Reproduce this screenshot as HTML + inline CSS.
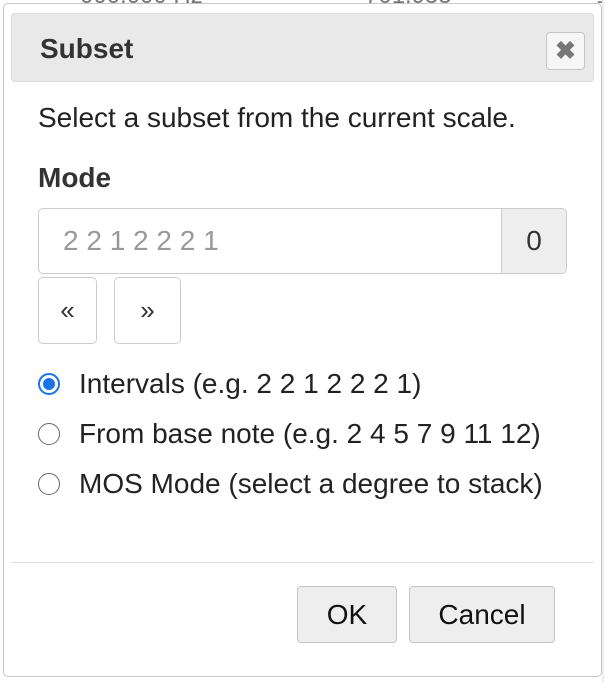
<!DOCTYPE html>
<html><head><meta charset="utf-8"><style>
*{box-sizing:border-box;margin:0;padding:0}
body{width:604px;height:682px;background:#fff;font-family:"Liberation Sans",Arial,sans-serif;position:relative;overflow:hidden;color:#222}
.bg{position:absolute;color:#777;font-size:24px}
.dlg{position:absolute;left:3px;top:3px;width:599px;height:674px;border:1px solid #c8c8c8;border-radius:5px;background:#fff}
.hdr{position:absolute;left:7px;top:9px;width:583px;height:69px;background:#e9e9e9;border:1px solid #dcdcdc;border-radius:4px}
.hdr .t{position:absolute;left:28px;top:19px;font-size:28px;font-weight:bold;color:#333}
.x{position:absolute;left:534px;top:18px;width:39px;height:38px;border:1px solid #c5c5c5;border-radius:4px;background:#f6f6f6;color:#777;font-size:25px;font-weight:bold;text-align:center;line-height:36px}
.txt{position:absolute;font-size:28px;color:#222;line-height:32px}
.inp{position:absolute;left:34px;top:204px;width:529px;height:66px;border:1px solid #ccc;border-radius:5px;overflow:hidden;background:#fff}
.inp .v{position:absolute;left:24px;top:16px;font-size:28px;color:#999}
.inp .a{position:absolute;right:0;top:0;width:65px;height:64px;background:#eee;border-left:1px solid #ccc;text-align:center;line-height:64px;font-size:28px;color:#333}
.b{position:absolute;border:1px solid #ccc;border-radius:5px;background:#fff;text-align:center;font-size:26px;color:#333}
.r{position:absolute;left:34px;width:22px;height:22px;border:1.5px solid #666;border-radius:50%;background:#fff}
.r.on{border:2px solid #1a73e8}
.r.on::after{content:"";position:absolute;left:3px;top:3px;width:12px;height:12px;border-radius:50%;background:#1a73e8}
.sep{position:absolute;left:7px;top:558px;width:583px;height:1px;background:#ddd}
.btn{position:absolute;top:582px;height:57px;border:1px solid #c5c5c5;border-radius:4px;background:#eee;font-size:28px;color:#111;text-align:center;line-height:55px}
</style></head><body>
<div class="bg" style="left:80px;top:-18px">000.000 Hz</div>
<div class="bg" style="left:365px;top:-18px">701.955</div>
<div class="bg" style="left:596px;top:-18px">1</div>
<div style="position:absolute;left:602px;top:0;width:2px;height:682px;background:#eee"></div>
<div class="dlg">
<div class="hdr"><div class="t">Subset</div><div class="x">✖</div></div>
<div class="txt" style="left:34px;top:98px">Select a subset from the current scale.</div>
<div class="txt" style="left:34px;top:158px;font-weight:bold;color:#333">Mode</div>
<div class="inp"><div class="v">2 2 1 2 2 2 1</div><div class="a">0</div></div>
<div class="b" style="left:34px;top:273px;width:59px;height:67px;line-height:65px">«</div>
<div class="b" style="left:110px;top:273px;width:67px;height:67px;line-height:65px">»</div>
<div class="r on" style="top:369px"></div>
<div class="txt" style="left:75px;top:364px">Intervals (e.g. 2 2 1 2 2 2 1)</div>
<div class="r" style="top:419px"></div>
<div class="txt" style="left:75px;top:414px">From base note (e.g. 2 4 5 7 9 11 12)</div>
<div class="r" style="top:469px"></div>
<div class="txt" style="left:75px;top:464px">MOS Mode (select a degree to stack)</div>
<div class="sep"></div>
<div class="btn" style="left:293px;width:100px">OK</div>
<div class="btn" style="left:405px;width:146px">Cancel</div>
</div>
</body></html>
